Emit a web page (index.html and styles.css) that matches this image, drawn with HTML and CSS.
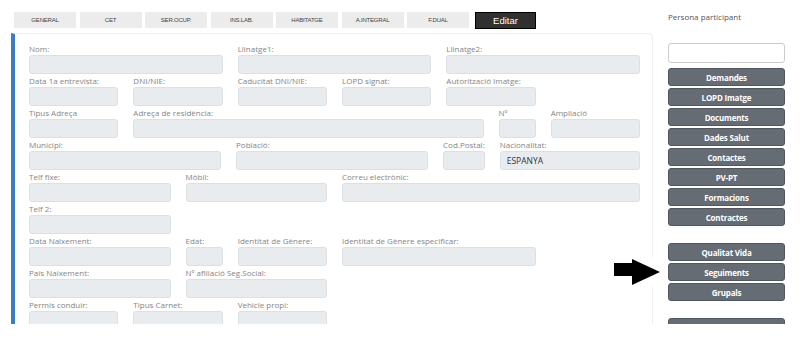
FILE: index.html
```html
<!DOCTYPE html>
<html lang="ca">
<head>
    <meta charset="UTF-8">
    <meta name="viewport" content="width=device-width, initial-scale=1.0">
    <title>Persona participant</title>
    <link rel="stylesheet" href="styles.css">
</head>
<body>
    <div class="page">
        <div class="main">
            <div class="tabs">
                <button class="tab">GENERAL</button>
                <button class="tab">CET</button>
                <button class="tab">SER.OCUP.</button>
                <button class="tab">INS.LAB.</button>
                <button class="tab">HABITATGE</button>
                <button class="tab">A.INTEGRAL</button>
                <button class="tab">F.DUAL</button>
                <button class="tab tab-edit">Editar</button>
            </div>

            <div class="card">
                <div class="row">
                    <div class="field s4"><label>Nom:</label><input type="text"></div>
                    <div class="field s4"><label>Llinatge1:</label><input type="text"></div>
                    <div class="field s4"><label>Llinatge2:</label><input type="text"></div>
                </div>
                <div class="row">
                    <div class="field s2"><label>Data 1a entrevista:</label><input type="text"></div>
                    <div class="field s2"><label>DNI/NIE:</label><input type="text"></div>
                    <div class="field s2"><label>Caducitat DNI/NIE:</label><input type="text"></div>
                    <div class="field s2"><label>LOPD signat:</label><input type="text"></div>
                    <div class="field s2"><label>Autorització Imatge:</label><input type="text"></div>
                </div>
                <div class="row">
                    <div class="field s2"><label>Tipus Adreça</label><input type="text"></div>
                    <div class="field s7"><label>Adreça de residència:</label><input type="text"></div>
                    <div class="field s1"><label>Nº</label><input type="text"></div>
                    <div class="field s2"><label>Ampliació</label><input type="text"></div>
                </div>
                <div class="row">
                    <div class="field s4"><label>Municipi:</label><input type="text"></div>
                    <div class="field s4"><label>Població:</label><input type="text"></div>
                    <div class="field s1"><label>Cod.Postal:</label><input type="text"></div>
                    <div class="field s3"><label>Nacionalitat:</label><input type="text" value="ESPANYA"></div>
                </div>
                <div class="row">
                    <div class="field s3"><label>Telf fixe:</label><input type="text"></div>
                    <div class="field s3"><label>Mòbil:</label><input type="text"></div>
                    <div class="field s6"><label>Correu electrònic:</label><input type="text"></div>
                </div>
                <div class="row">
                    <div class="field s3"><label>Telf 2:</label><input type="text"></div>
                </div>
                <div class="row">
                    <div class="field s3"><label>Data Naixement:</label><input type="text"></div>
                    <div class="field s1"><label>Edat:</label><input type="text"></div>
                    <div class="field s2"><label>Identitat de Gènere:</label><input type="text"></div>
                    <div class="field s4"><label>Identitat de Gènere especificar:</label><input type="text"></div>
                </div>
                <div class="row">
                    <div class="field s3"><label>País Naixement:</label><input type="text"></div>
                    <div class="field s3"><label>Nº afiliació Seg.Social:</label><input type="text"></div>
                </div>
                <div class="row">
                    <div class="field s2"><label>Permís conduir:</label><input type="text"></div>
                    <div class="field s2"><label>Tipus Carnet:</label><input type="text"></div>
                    <div class="field s2"><label>Vehicle propi:</label><input type="text"></div>
                </div>
            </div>
        </div>

        <div class="sidebar">
            <p class="side-title">Persona participant</p>
            <input type="text" class="side-search">
            <div class="side-group">
                <button class="side-btn">Demandes</button>
                <button class="side-btn">LOPD Imatge</button>
                <button class="side-btn">Documents</button>
                <button class="side-btn">Dades Salut</button>
                <button class="side-btn">Contactes</button>
                <button class="side-btn">PV-PT</button>
                <button class="side-btn">Formacions</button>
                <button class="side-btn">Contractes</button>
            </div>
            <div class="side-group">
                <button class="side-btn">Qualitat Vida</button>
                <button class="side-btn">Seguiments</button>
                <button class="side-btn">Grupals</button>
            </div>
            <div class="side-group">
                <button class="side-btn">Historial</button>
            </div>
        </div>

        <!-- arrow pointing at Seguiments -->
        <svg class="pointer" width="50" height="30" viewBox="0 0 50 30">
            <rect width="50" height="30" fill="#fff"/>
            <polygon points="2,6 20,6 20,2 48,15 20,28 20,19 2,19" fill="#000"/>
        </svg>
    </div>
</body>
</html>
```

FILE: styles.css
```css
body {
    margin: 0;
    background: #fff;
    font-family: "Open Sans", sans-serif;
    color: #333;
}

/* whole visible area, clipped at the bottom like the scrolled view */
.page {
    position: relative;
    display: flex;
    height: 324px;
    overflow: hidden;
}

.main {
    width: 642px;
    margin-left: 11px;
}

/* Tab buttons */
.tabs {
    display: flex;
    gap: 3.5px;
    margin: 12px 0 4px 3px;
}

.tab {
    width: 62px;
    height: 16px;
    padding: 0;
    border: none;
    background: #ececec;
    color: #444;
    font-family: "Liberation Sans", Arial, sans-serif;
    font-size: 6px;
    letter-spacing: -0.2px;
}

.tab-edit {
    width: 61px;
    height: 17px;
    margin-left: 2.5px;
    background: #303030;
    border: 1px solid #000;
    color: #fff;
    font-size: 9.5px;
    letter-spacing: 0;
}

/* Form card */
.card {
    border: 1px solid #eee;
    border-left: 4px solid #3a7dc4;
    border-bottom: none;
    border-top-right-radius: 5px;
    padding: 9px 12px 0 14px;
    height: 300px;
}

.row {
    display: grid;
    grid-template-columns: repeat(12, 1fr);
    column-gap: 15px;
    width: 611px;
}

.field label {
    display: block;
    height: 12px;
    font-size: 8px;
    line-height: 12px;
    color: #858585;
    white-space: nowrap;
}

.field input {
    display: block;
    box-sizing: border-box;
    width: 100%;
    height: 19px;
    margin-bottom: 1px;
    padding: 0 6px;
    border: 1px solid #dde0e3;
    border-radius: 3px;
    background: #e9ecef;
    font-family: "Open Sans", sans-serif;
    font-size: 8.5px;
    color: #333;
}

.s1 { grid-column: span 1; }
.s2 { grid-column: span 2; }
.s3 { grid-column: span 3; }
.s4 { grid-column: span 4; }
.s6 { grid-column: span 6; }
.s7 { grid-column: span 7; }

/* Right sidebar */
.sidebar {
    width: 117px;
    margin-left: 15px;
}

.side-title {
    margin: 11px 0 0;
    font-size: 8px;
    line-height: 12px;
    color: #555;
}

.side-search {
    display: block;
    box-sizing: border-box;
    width: 117px;
    height: 20px;
    margin-top: 20px;
    border: 1px solid #ccc;
    border-radius: 3px;
}

.side-group {
    display: flex;
    flex-direction: column;
    gap: 2px;
    margin-top: 5px;
}

.side-group + .side-group {
    margin-top: 17px;
}

.side-btn {
    height: 18px;
    padding: 0;
    border: 1px solid #50575e;
    border-radius: 3px;
    background: #656c74;
    color: #fff;
    font-family: "Open Sans", sans-serif;
    font-size: 8px;
    font-weight: 700;
    letter-spacing: -0.2px;
}

.pointer {
    position: absolute;
    left: 612px;
    top: 257px;
}
```
